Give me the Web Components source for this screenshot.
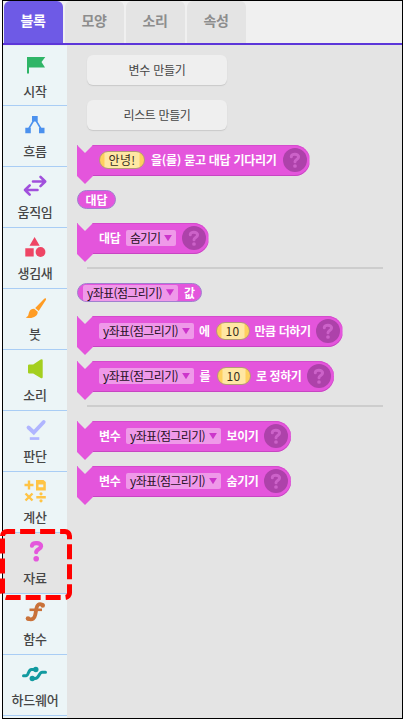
<!DOCTYPE html>
<html lang="ko"><head><meta charset="utf-8"><title>블록</title>
<style>
html,body{margin:0;background:#fff}
body{font-family:"Noto Sans CJK KR",sans-serif;width:403px;height:719px;overflow:hidden}
</style></head><body>
<block-app></block-app>
<script>
const define=(name,html,ready)=>{
  const t=document.createElement('template');t.innerHTML=html;
  customElements.define(name,class extends HTMLElement{
    connectedCallback(){
      if(this.shadowRoot)return;
      this.attachShadow({mode:'open'}).append(t.content.cloneNode(true));
      if(ready)ready(this,this.shadowRoot);
    }
  });
};
/* Label whose letter spacing adapts to the width given in "w" */
define('fit-text',`<style>:host{display:block;white-space:pre;flex:none;line-height:18px}span{display:inline-block}</style><span><slot></slot></span>`,(h,r)=>{
  const w=+h.getAttribute('w'),s=r.querySelector('span');
  const n=[...h.textContent].length;
  h.style.width=w+'px';
  s.style.letterSpacing=((w-s.getBoundingClientRect().width)/n)+'px';
});
define('app-tab',`<style>:host{display:flex;box-sizing:border-box;width:59px;height:42px;border-radius:6px 6px 0 0;background:#e4e4e4;color:#8d8d8d;align-items:center;justify-content:center;font-size:14px;font-weight:700;padding:0 1px 4px 0}
:host([active]){background:#6e5ae6;color:#fff}</style><fit-text w="25"></fit-text>`,(h,r)=>{
  const f=document.createElement('fit-text');f.setAttribute('w',h.getAttribute('w'));f.textContent=h.getAttribute('label');
  r.querySelector('fit-text').replaceWith(f);
});
define('category-item',`<style>:host{display:flex;flex-direction:column;align-items:center;box-sizing:border-box;width:64px;height:61px;flex:none;border-bottom:1px solid #a9cdf5;background:#ecf5f7;color:#464646;font-size:13px;font-weight:500}
:host([active]){background:#e4e4e4}.i{height:34px;width:30px;padding-top:2px}.l{height:20px;display:flex}</style><div class="i"><slot name="icon"></slot></div><div class="l"><slot></slot></div>`);
define('make-button',`<style>:host{display:flex;align-items:center;justify-content:center;box-sizing:border-box;width:140px;height:30px;margin-left:10px;border-radius:6px;background:#efefef;box-shadow:0 1px 1px #c9c9c9;font-size:12px;color:#454545}</style><slot></slot>`);
define('help-mark',`<style>:host{display:block;flex:none;width:24px;height:24px}svg{display:block}</style><svg width="24" height="24" viewBox="0 0 24 24"><circle cx="12" cy="12" r="12" fill="#ad42aa"/><path d="M8.300 8.700C8.300 5.300 15.700 5.300 15.600 9c-.1 2.600-3.600 2.500-3.600 4.800" fill="none" stroke="#cc62c9" stroke-width="3" stroke-linecap="round"/><circle cx="12" cy="18" r="1.850" fill="#cc62c9"/></svg>`);
define('drop-field',`<style>:host{display:flex;box-sizing:border-box;flex:none;width:95px;height:16px;border-radius:2px;background:#ef99e9;color:#271025;font-weight:400;font-size:12px;align-items:center;justify-content:space-between;padding:0 4px}i{display:block;flex:none;width:8px;height:6.500px;background:#cc35cb;clip-path:polygon(0 0,100% 0,50% 100%)}</style><slot></slot><i></i>`);
define('value-field',`<style>:host{display:flex;box-sizing:border-box;flex:none;height:18px;border-radius:9px;border:1px solid #b49a77;background:linear-gradient(90deg,#ffd05e 4px,#ffe7a3 5px,#ffe7a3 calc(100% - 5px),#ffd05e calc(100% - 4px));color:#37301e;font-size:12px;font-weight:400;align-items:center;justify-content:center}</style><slot></slot>`);
define('command-block',`<style>:host{display:block;position:relative;width:max-content;height:31px}
.b{display:flex;align-items:center;box-sizing:border-box;height:31px;padding:0 3px 1px 22px;border-radius:0 16px 16px 0;background:#e455dc;box-shadow:inset 0 -1px #c745c2,inset 0 1px #d54bcd;color:#fff;font-size:12px;font-weight:700;clip-path:polygon(0 0,8px 8px,16px 0,100% 0,100% 31px,0 31px)}
.t{position:absolute;left:0;top:30px;width:16px;height:9px;background:#e455dc;clip-path:polygon(0 0,16px 0,16px 1px,8px 9px,0 1px)}
</style><div class="b"><slot></slot><help-mark></help-mark></div><div class="t"></div>`,(h,r)=>{r.querySelector('.b').style.gap=h.getAttribute('gap')+'px'});
define('value-block',`<style>:host{display:flex;width:max-content;height:19px;box-sizing:border-box;border:1px solid #a080cf;border-radius:10px;background:#e455dc;align-items:center;color:#fff;font-size:12px;font-weight:700;gap:6px}</style><slot></slot>`);
define('rule-line',`<style>:host{display:block;width:296px;height:2px;margin-left:10px;background:#cdcdcd}</style>`);
define('focus-frame',`<style>:host{position:absolute;left:0;top:529px;width:73px;height:72px}svg{display:block}</style><svg width="73" height="72"><path d="M2.500 7a4.500 4.500 0 0 1 4.500-4.500H65a4.500 4.500 0 0 1 4.500 4.500V64a4.500 4.500 0 0 1-4.500 4.500H7a4.500 4.500 0 0 1-4.500-4.500Z" fill="none" stroke="#f00" stroke-width="5" stroke-dasharray="15 5"/></svg>`);
define('block-app',`<style>
:host{display:block;position:relative;width:403px;height:719px}
.frame{display:flex;flex-direction:column;box-sizing:border-box;width:401px;height:719px;margin-left:2px;border:1px solid #000;background:#e4e4e4}
nav{display:flex;gap:2px;padding-left:1px;height:42px;background:#f0f0f0;flex:none}
.line{height:2px;background:#5c36d9;flex:none}
main{display:flex;flex:1;min-height:0}
aside{width:64px;background:#ecf5f7;border-top:1px solid #e9edf2;box-sizing:border-box;overflow:hidden}
section{padding:10px 0 0 10px;flex:1;display:flex;flex-direction:column}
section>*{flex:none}
svg{display:block}
</style>
<div class="frame"><nav>
<app-tab active label="블록" w="25"></app-tab><app-tab label="모양" w="25"></app-tab><app-tab label="소리" w="25"></app-tab><app-tab label="속성" w="25"></app-tab></nav><div class="line"></div>
<main><aside>
<category-item style="height:60px"><svg slot="icon" width="30" height="30"><path d="M7 9h18.300l-3.800 5 3.500 5.500H9v6H7Z" fill="#2fb567"/></svg><fit-text w="23.500">시작</fit-text></category-item>
<category-item><svg slot="icon" width="30" height="30"><path d="m8 22 6.800-11.500L21.700 22" fill="none" stroke="#4b91ee" stroke-width="1.600"/><path d="M12 8h5.700v5.500H12zM5.300 19.800h5.500v5.400H5.300zM19 19.800h5.500v5.400H19z" fill="#4b91ee"/></svg><fit-text w="23.500">흐름</fit-text></category-item>
<category-item><svg slot="icon" width="30" height="30"><path d="M13 12.500h12m-4.500-4.700 4.700 4.700-4.700 4.700M17.500 21H5m4.700-4.700L5 21l4.700 4.700" fill="none" stroke="#a150dc" stroke-width="2.600" stroke-linecap="round" stroke-linejoin="round"/></svg><fit-text w="35">움직임</fit-text></category-item>
<category-item><svg slot="icon" width="30" height="30"><path d="m14.600 7 5.100 8.700H9.500ZM5.300 18.300h8.400v8.200H5.300z" fill="#ee4564"/><circle cx="20.500" cy="22" r="4.900" fill="#ee4564"/></svg><fit-text w="35">생김새</fit-text></category-item>
<category-item><svg slot="icon" width="30" height="30"><path transform="translate(.7 1)" d="M25 6.300c.6.500.4 1.200 0 2L18 19l-3.500-3L23.500 6.800c.5-.5 1-.8 1.500-.5ZM13.500 16.800l3.500 3c.2 5-6 7.500-12 5.700 3-1 2.500-2.800 3.500-5.500.8-2.200 2.700-3.300 5-3.200Z" fill="#ff9c24"/></svg><fit-text w="12">붓</fit-text></category-item>
<category-item><svg slot="icon" width="30" height="30"><path transform="translate(1.200 .5)" d="M8 12h4l7.500-5q2-1 2 1v16.500q0 2-2 1L12 21H8q-1.200 0-1.200-1v-7q0-1 1.200-1Z" fill="#a4cf1f"/></svg><fit-text w="23.500">소리</fit-text></category-item>
<category-item><svg slot="icon" width="30" height="30"><path d="m8.500 14.500 5.300 5L23.700 9" fill="none" stroke="#b0b5ff" stroke-width="3.800" stroke-linecap="round"/><path d="M9.800 24.200h9.500v2.700H9.800z" fill="#b0b5ff"/></svg><fit-text w="23.500">판단</fit-text></category-item>
<category-item><svg slot="icon" width="30" height="30"><path d="M4.500 11h9M9 6.500v9M5.500 19.500l7 7m0-7-7 7M16.300 23.300h9.500" fill="none" stroke="#ffc445" stroke-width="2.400"/><path fill-rule="evenodd" d="M16 6h7.500l2.300 2v8.500H16V6Zm2.500 4.500v2.700h4.800v-2.700Z" fill="#ffc445"/><circle cx="21" cy="19.800" r="1.600" fill="#ffc445"/><circle cx="21" cy="26.800" r="1.600" fill="#ffc445"/></svg><fit-text w="23.500">계산</fit-text></category-item>
<category-item active><svg slot="icon" width="30" height="30"><path d="M12 10.700C12.500 7 21.500 7.200 21.100 11.300c-.3 3.200-4.900 2.700-4.900 5.900" fill="none" stroke="#e457dc" stroke-width="4.200" stroke-linecap="round"/><circle cx="16.200" cy="23.700" r="2.800" fill="#e457dc"/></svg><fit-text w="23.500">자료</fit-text></category-item>
<category-item><svg slot="icon" width="30" height="30"><path d="M22.500 8.700c-4-1.500-5.300.3-6 3.500l-1.200 6.500c-.7 3.500-2.600 5.500-7 4.200" fill="none" stroke="#c9723a" stroke-width="3.800" stroke-linecap="round"/><path d="M9.500 13.800h12.500" stroke="#c9723a" stroke-width="2.600"/><circle cx="22.700" cy="9.500" r="2.300" fill="#c9723a"/><circle cx="8" cy="22.500" r="2.300" fill="#c9723a"/></svg><fit-text w="23.500">함수</fit-text></category-item>
<category-item><svg slot="icon" width="30" height="30"><path d="M3.500 18.800H6c2.500 0 2.200-6.300 5.500-6.300h4M12.500 21.500h2.700c4 0 3.500-6.300 7-6.300h3.300" fill="none" stroke="#129aa0" stroke-width="3" stroke-linecap="round" stroke-linejoin="round"/><circle cx="15.800" cy="12.500" r="2.700" fill="#129aa0"/><circle cx="12.300" cy="21.500" r="2.700" fill="#129aa0"/></svg><fit-text w="47">하드웨어</fit-text></category-item>
</aside>
<section>
<make-button><fit-text w="57">변수 만들기</fit-text></make-button>
<make-button style="margin-top:15px"><fit-text w="67">리스트 만들기</fit-text></make-button>
<command-block gap="6" style="margin-top:15px"><value-field style="width:46px"><fit-text w="27">안녕!</fit-text></value-field><fit-text w="125.500">을(를) 묻고 대답 기다리기</fit-text></command-block>
<value-block style="margin-top:14px;padding:0 7.500px"><fit-text w="22">대답</fit-text></value-block>
<command-block gap="5.500" style="margin-top:14px"><fit-text w="21.500">대답</fit-text><drop-field style="width:50px"><fit-text w="30">숨기기</fit-text></drop-field></command-block>
<rule-line style="margin-top:13px"></rule-line>
<value-block style="margin-top:14px;padding:0 5px"><drop-field><fit-text w="75">y좌표(점그리기)</fit-text></drop-field><fit-text w="11.500">값</fit-text></value-block>
<command-block gap="5" style="margin-top:14px"><drop-field><fit-text w="75">y좌표(점그리기)</fit-text></drop-field><fit-text w="11.500">에</fit-text><value-field style="width:34px"><fit-text w="14">10</fit-text></value-field><fit-text w="56">만큼 더하기</fit-text></command-block>
<command-block gap="5.500" style="margin-top:14px"><drop-field><fit-text w="75">y좌표(점그리기)</fit-text></drop-field><fit-text w="11.500">를</fit-text><value-field style="width:34px"><fit-text w="14">10</fit-text></value-field><fit-text w="45.500">로 정하기</fit-text></command-block>
<rule-line style="margin-top:13px"></rule-line>
<command-block gap="5.500" style="margin-top:14px"><fit-text w="21.500">변수</fit-text><drop-field><fit-text w="75">y좌표(점그리기)</fit-text></drop-field><fit-text w="32">보이기</fit-text></command-block>
<command-block gap="5.500" style="margin-top:14px"><fit-text w="21.500">변수</fit-text><drop-field><fit-text w="75">y좌표(점그리기)</fit-text></drop-field><fit-text w="32">숨기기</fit-text></command-block>
</section></main></div><focus-frame></focus-frame>`);
</script></body></html>
